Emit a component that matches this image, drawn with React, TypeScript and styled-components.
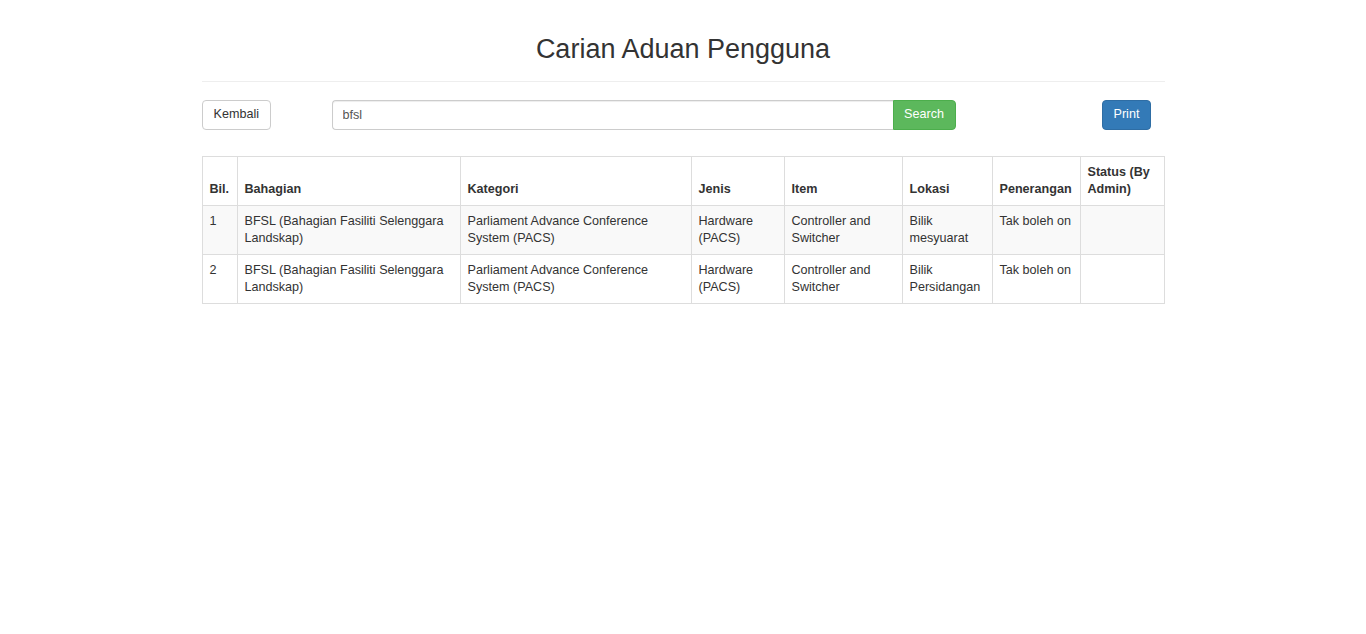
import React from "react";
import styled, { createGlobalStyle } from "styled-components";

const GlobalStyle = createGlobalStyle`
  html, body { margin: 0; padding: 0; background: #fff; }
  body {
    font-family: "Liberation Sans", Arial, Helvetica, sans-serif;
    font-size: 12.6px;
    line-height: 18px;
    color: #333;
  }
  * { box-sizing: border-box; }
`;

const Container = styled.div`
  width: 963px;
  margin: 0 auto;
`;

const Title = styled.h2`
  margin: 34px 0 0;
  font-size: 27px;
  font-weight: 400;
  line-height: 30px;
  text-align: center;
  color: #333;
`;

const Divider = styled.hr`
  margin: 17px 0 18px;
  border: 0;
  border-top: 1px solid #eee;
`;

const Toolbar = styled.div`
  display: grid;
  grid-template-columns: 130px 624px 146px auto;
  align-items: start;
`;

const Button = styled.button<{ $variant?: "default" | "success" | "primary" }>`
  height: 30px;
  padding: 4px 11px 6px;
  font-family: inherit;
  font-size: 12.6px;
  line-height: 18px;
  border-radius: 4px;
  border: 1px solid
    ${(p) =>
      p.$variant === "success" ? "#4cae4c" : p.$variant === "primary" ? "#2e6da4" : "#ccc"};
  background: ${(p) =>
    p.$variant === "success" ? "#5cb85c" : p.$variant === "primary" ? "#337ab7" : "#fff"};
  color: ${(p) => (p.$variant && p.$variant !== "default" ? "#fff" : "#333")};
  cursor: pointer;
  justify-self: start;
`;

const InputGroup = styled.div`
  display: flex;
`;

const SearchInput = styled.input`
  flex: 1;
  height: 30px;
  padding: 5px 10px;
  font-family: inherit;
  font-size: 12.6px;
  color: #555;
  border: 1px solid #ccc;
  border-right: 0;
  border-radius: 4px 0 0 4px;
  box-shadow: inset 0 1px 1px rgba(0, 0, 0, 0.075);
  outline: none;
`;

const GroupButton = styled(Button)`
  border-radius: 0 4px 4px 0;
  width: 63px;
  padding-left: 0;
  padding-right: 0;
`;

const Table = styled.table`
  margin-top: 26px;
  width: 962px;
  table-layout: fixed;
  border-collapse: collapse;
  border: 1px solid #ddd;
`;

const Th = styled.th`
  padding: 7px 7px;
  text-align: left;
  vertical-align: bottom;
  font-weight: 700;
  line-height: 17px;
  border: 1px solid #ddd;
`;

const Row = styled.tr<{ $striped?: boolean }>`
  background: ${(p) => (p.$striped ? "#f9f9f9" : "#fff")};
`;

const Td = styled.td`
  padding: 7px 7px 7px;
  vertical-align: top;
  line-height: 17px;
  border: 1px solid #ddd;
`;

const columns = [
  { label: "Bil.", width: 35 },
  { label: "Bahagian", width: 223 },
  { label: "Kategori", width: 231 },
  { label: "Jenis", width: 93 },
  { label: "Item", width: 118 },
  { label: "Lokasi", width: 90 },
  { label: "Penerangan", width: 88 },
  { label: "Status (By Admin)", width: 84 },
];

const rows = [
  ["1", "BFSL (Bahagian Fasiliti Selenggara Landskap)", "Parliament Advance Conference System (PACS)", "Hardware (PACS)", "Controller and Switcher", "Bilik mesyuarat", "Tak boleh on", ""],
  ["2", "BFSL (Bahagian Fasiliti Selenggara Landskap)", "Parliament Advance Conference System (PACS)", "Hardware (PACS)", "Controller and Switcher", "Bilik Persidangan", "Tak boleh on", ""],
];

export default function App() {
  return (
    <>
      <GlobalStyle />
      <Container>
        <Title>Carian Aduan Pengguna</Title>
        <Divider />
        <Toolbar>
          <Button>Kembali</Button>
          <InputGroup>
            <SearchInput defaultValue="bfsl" />
            <GroupButton $variant="success">Search</GroupButton>
          </InputGroup>
          <span />
          <Button $variant="primary">Print</Button>
        </Toolbar>
        <Table>
          <colgroup>
            {columns.map((c) => (
              <col key={c.label} style={{ width: c.width }} />
            ))}
          </colgroup>
          <thead>
            <tr>
              {columns.map((c) => (
                <Th key={c.label}>{c.label}</Th>
              ))}
            </tr>
          </thead>
          <tbody>
            {rows.map((r, i) => (
              <Row key={i} $striped={i % 2 === 0}>
                {r.map((cell, j) => (
                  <Td key={j}>{cell}</Td>
                ))}
              </Row>
            ))}
          </tbody>
        </Table>
      </Container>
    </>
  );
}
